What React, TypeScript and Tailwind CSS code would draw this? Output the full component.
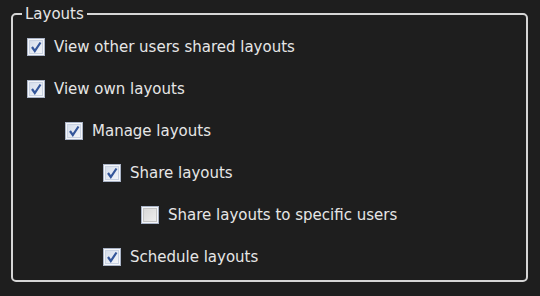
import type { ReactNode } from 'react';

interface OptionRowProps {
  level: number;
  checked: boolean;
  children: ReactNode;
}

const indents = ['pl-[14px]', 'pl-[52px]', 'pl-[90px]', 'pl-[128px]'];

function Checkbox({ checked }: { checked: boolean }) {
  return (
    <span className="flex h-[18px] w-[18px] shrink-0 items-center justify-center border border-[#a9b3c6] bg-[#f4f6fa]">
      <span
        className={`flex h-[14px] w-[14px] items-center justify-center border ${
          checked
            ? 'border-[#c9d2e2] bg-gradient-to-br from-[#d5ddeb] to-[#f3f5f9]'
            : 'border-[#c4c4c4] bg-gradient-to-br from-[#d8d8d8] to-[#eeeeee]'
        }`}
      >
        {checked && (
          <svg width="12" height="12" viewBox="0 0 12 12">
            <path
              d="M2 6 L4.8 10 L10.5 1.5"
              fill="none"
              stroke="#34569a"
              strokeWidth="2.2"
              strokeLinejoin="miter"
            />
          </svg>
        )}
      </span>
    </span>
  );
}

function OptionRow({ level, checked, children }: OptionRowProps) {
  return (
    <label className={`flex h-[42px] items-center gap-[9px] ${indents[level]}`}>
      <Checkbox checked={checked} />
      <span className="text-[15px] leading-[18px] text-[#e6e6e6]">{children}</span>
    </label>
  );
}

export default function App() {
  return (
    <div
      className="h-[296px] w-[540px] overflow-hidden bg-[#1e1e1e] pl-[11px] pt-[6px]"
      style={{ fontFamily: '"DejaVu Sans", Verdana, sans-serif' }}
    >
      <fieldset className="h-[276px] w-[517px] rounded-[5px] border-2 border-[#d6d6d6] pt-[4px]">
        <legend className="ml-[9px] px-[3px] text-[15px] leading-[16px] text-[#e6e6e6]">
          Layouts
        </legend>
        <div className="flex flex-col">
          <OptionRow level={0} checked>
            View other users shared layouts
          </OptionRow>
          <OptionRow level={0} checked>
            View own layouts
          </OptionRow>
          <OptionRow level={1} checked>
            Manage layouts
          </OptionRow>
          <OptionRow level={2} checked>
            Share layouts
          </OptionRow>
          <OptionRow level={3} checked={false}>
            Share layouts to specific users
          </OptionRow>
          <OptionRow level={2} checked>
            Schedule layouts
          </OptionRow>
        </div>
      </fieldset>
    </div>
  );
}
